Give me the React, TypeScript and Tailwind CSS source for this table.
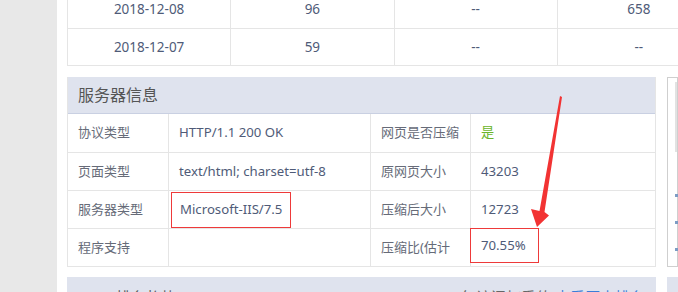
const font = "font-['Microsoft_YaHei','Noto_Sans','Noto_Sans_CJK_SC',sans-serif]";

const TopRow = ({ cells, last = false }: { cells: string[]; last?: boolean }) => (
    <div className={`grid grid-cols-4 h-[38px] ${last ? "border-b border-[#e5e5e5]" : ""}`}>
        {cells.map((c, i) => (
            <div
                key={i}
                className="flex items-center justify-center border-l border-t border-[#e5e5e5] text-[13.5px] text-[#4f5b78]"
            >
                {c}
            </div>
        ))}
    </div>
);

const InfoRow = ({ children }: { children: React.ReactNode }) => (
    <div className="grid grid-cols-[101px_202px_100px_1fr] h-[38px] border-t border-[#e5e5e5]">{children}</div>
);

const Label = ({ text }: { text: string }) => (
    <div className="flex items-center px-[10px] border-r border-[#e5e5e5] text-[13px] whitespace-nowrap text-[#666b78]">{text}</div>
);

const Value = ({ children, last = false }: { children?: React.ReactNode; last?: boolean }) => (
    <div className={`flex items-center px-[10px] text-[13.2px] whitespace-nowrap text-[#4f5b78] ${last ? "" : "border-r border-[#e5e5e5]"}`}>
        {children}
    </div>
);

export default function App() {
    return (
        <div className={`relative flex w-[678px] h-[292px] overflow-hidden bg-white ${font}`}>
            <div className="w-[57px] shrink-0 bg-[#e8e8e8]" />
            <div className="flex-1 pl-[10px] min-w-0">
                {/* daily stats table */}
                <div className="w-[654px] mt-[-10px] border-r border-[#e5e5e5]">
                    <TopRow cells={["2018-12-08", "96", "--", "658"]} />
                    <TopRow cells={["2018-12-07", "59", "--", "--"]} last />
                </div>

                <div className="flex gap-[11px] mt-[11px]">
                    {/* server info */}
                    <div className="w-[589px] shrink-0">
                        <div className="border border-[#e5e5e5] border-t-0">
                            <div className="h-[37px] bg-[#dfe3ee] border-b border-[#c9d0e2] flex items-center px-[10px] text-[16px] text-[#555]">
                                服务器信息
                            </div>
                            <div className="grid grid-cols-[101px_202px_100px_1fr] h-[38px]">
                                <Label text="协议类型" />
                                <Value>HTTP/1.1 200 OK</Value>
                                <Label text="网页是否压缩" />
                                <Value last>
                                    <span className="text-[#6cb52a]">是</span>
                                </Value>
                            </div>
                            <InfoRow>
                                <Label text="页面类型" />
                                <Value>text/html; charset=utf-8</Value>
                                <Label text="原网页大小" />
                                <Value last>43203</Value>
                            </InfoRow>
                            <InfoRow>
                                <Label text="服务器类型" />
                                <div className="flex items-center px-[2px] border-r border-[#e5e5e5]">
                                    <span className="flex items-center w-[120px] h-[36px] pl-[8px] border border-[#ee3a3a] text-[13.2px] whitespace-nowrap text-[#4f5b78]">
                                        Microsoft-IIS/7.5
                                    </span>
                                </div>
                                <Label text="压缩后大小" />
                                <Value last>12723</Value>
                            </InfoRow>
                            <InfoRow>
                                <Label text="程序支持" />
                                <Value />
                                <Label text="压缩比(估计" />
                                <div className="flex items-start ml-[-1px]">
                                    <span className="flex items-center w-[69px] h-[35px] pl-[10px] mt-[-1px] border border-[#ee3a3a] text-[13.2px] text-[#4f5b78]">
                                        70.55%
                                    </span>
                                </div>
                            </InfoRow>
                        </div>

                        <div className="mt-[10px] h-[40px] bg-[#dfe3ee] flex justify-between px-[11px] pt-[10px] text-[15px] leading-[20px]">
                            <span className="text-[#555]">Alexa排名趋势</span>
                            <span className="text-[#666]">
                                每访问权重值 <span className="text-[#3b7dd8]">查看历史排名</span>
                            </span>
                        </div>
                    </div>

                    {/* right side panel */}
                    <div className="flex-1 min-w-0">
                        <div className="h-[190px] border border-[#cfcfcf] pt-[4px] pl-[7px]">
                            <div className="h-[70px] border border-[#e2e2e2] bg-[#f6f1e7]" />
                            <div className="flex flex-col gap-[24px] mt-[42px]">
                                <div className="w-[3px] h-[3px] bg-[#7d9cc4]" />
                                <div className="w-[3px] h-[3px] bg-[#7d9cc4]" />
                                <div className="w-[3px] h-[3px] bg-[#7d9cc4]" />
                            </div>
                        </div>
                        <div className="mt-[10px] h-[40px] bg-[#dfe3ee]" />
                    </div>
                </div>
            </div>

            {/* annotation arrow */}
            <svg className="absolute left-0 top-0 pointer-events-none" width="678" height="292" viewBox="0 0 678 292">
                <polygon
                    points="560,96 562,97 544.5,212 549,215.5 537,227 531,209 539.5,211"
                    fill="#f23333"
                />
            </svg>
        </div>
    );
}
